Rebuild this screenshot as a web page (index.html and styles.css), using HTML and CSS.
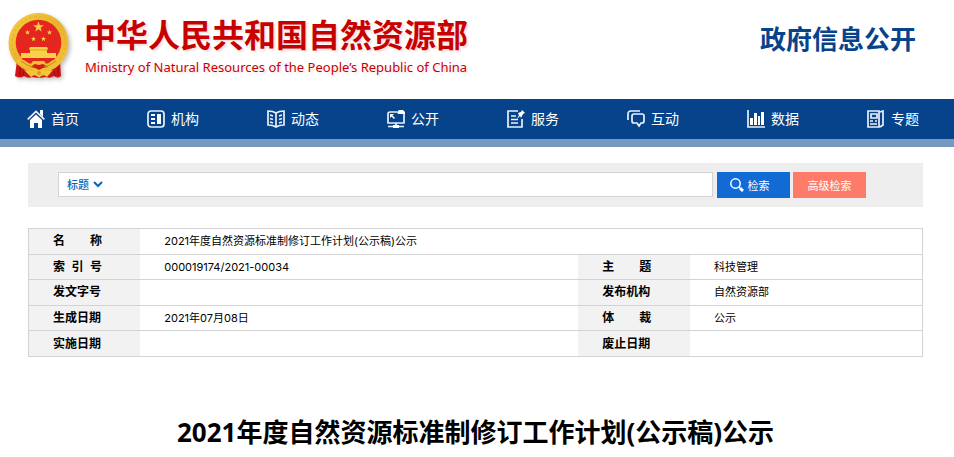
FILE: index.html
```html
<!DOCTYPE html>
<html lang="zh-CN">
<head>
<meta charset="utf-8">
<title>政府信息公开</title>
<link rel="stylesheet" href="styles.css">
</head>
<body>
<header class="header">
  <a class="brand" href="#">
    <svg class="emblem" viewBox="0 0 62 66" aria-hidden="true">
      <defs>
        <linearGradient id="gold" x1="0" y1="0" x2="1" y2="1">
          <stop offset="0" stop-color="#f6cf45"/><stop offset=".5" stop-color="#e9b32b"/><stop offset="1" stop-color="#f3c63c"/>
        </linearGradient>
        <path id="star" d="M0-5 1.2-1.6 4.8-1.5 1.9.6 2.9 4 0 2-2.9 4-1.9.6-4.8-1.5-1.2-1.6z"/>
      </defs>
      <path d="M9 47 7 63q5 3 9 0 4 3 8 1l7 1 7-1q4 2 8-1 4 3 7 0l-1-16z" fill="#cf1518"/>
      <path d="M12 54v9M50 54v9M16 58l-1 5M46 58l1 5" stroke="#8f0d12"/>
      <circle cx="30.500" cy="30" r="30" fill="url(#gold)"/>
      <circle cx="30.500" cy="30" r="26.500" fill="none" stroke="#e0aa2a" stroke-dasharray="2 3"/>
      <circle cx="30.500" cy="29.500" r="22.800" fill="#e5261f"/>
      <path d="M13 44q17 12 35 0l-4 6H17z" fill="#e5261f"/>
      <g fill="#f7d148">
        <use href="#star" transform="translate(30.500 14) scale(1.1)"/>
        <use href="#star" transform="translate(19.500 19.500) scale(.55)"/>
        <use href="#star" transform="translate(41.500 19.500) scale(.55)"/>
        <use href="#star" transform="translate(25.500 26) scale(.55)"/>
        <use href="#star" transform="translate(35.500 26) scale(.55)"/>
        <path d="M22 34h17l1 2-1 1v3h9v5H13v-5h9v-3l-1-1z"/>
      </g>
      <path d="M22 37h17" stroke="#d58f1c" stroke-width=".7"/>
      <path d="M8 46q9-1 14 6l3-4h11l3 4q5-7 14-6-1 9-12 9l-10 4-10-4q-11 0-13-9z" fill="#f0bf35"/>
      <path d="m22 54 5-3 4 1 4-1 5 3-5 1-4 2-4-2z" fill="#d51b1b"/>
      <path d="M13 48q6 5 12 6M48 48q-6 5-12 6" fill="none" stroke="#ca8a1b"/>
      <path d="M16 57q9 2 15 0 6 2 14 0l-6 7q-4-4-8 1-4-5-8-1z" fill="#f2c63b"/>
      <circle cx="31" cy="60" r="2" fill="#d89b22"/>
    </svg>
    <span class="brand-text">
      <strong class="brand-cn">中华人民共和国自然资源部</strong>
      <span class="brand-en">Ministry of Natural Resources of the People’s Republic of China</span>
    </span>
  </a>
  <h2 class="section-name">政府信息公开</h2>
</header>

<nav class="nav">
  <a href="#"><svg viewBox="0 0 18 18"><path class="line" d="M.7 9.300 9 1.500l8.300 7.800" stroke-width="2"/><path class="solid" d="M13 0h3v7l-3-3zM3 10l6-5.500 6 5.500v8h-4v-5H7v5H3z"/></svg>首页</a>
  <a href="#"><svg viewBox="0 0 18 18"><rect class="line" x="1" y="1" width="16" height="16" rx="3"/><path class="solid" d="M10 4h4v10h-4zM4 4h4v2H4zM4 8h4v2H4zM4 12h4v2H4z"/></svg>机构</a>
  <a href="#"><svg viewBox="0 0 18 18"><path class="line" d="M9 3Q6 1 1 1v14q5 0 8 2 3-2 8-2V1q-5 0-8 2zM9 3v14M3 5l3 1M3 8.500l3 1M3 12l3 1M15 5l-3 1M15 8.500l-3 1M15 12l-3 1"/></svg>动态</a>
  <a href="#"><svg viewBox="0 0 18 18"><path class="line" d="M10 2H3Q1 2 1 4v9h16V4M9 13v3M1 16.500h6M11 16.500h6M4 5l3.500 3.500"/><path class="solid" d="M12 0h4l2 2v2h-7l-1-2zM6 15h6v3H6zM3 4h4L3 8z"/></svg>公开</a>
  <a href="#"><svg viewBox="0 0 18 18"><path class="line" d="M11 1H1v16h14V9M4 6h5M4 9.500h7M4 13h7"/><path class="solid" d="m15 0 3 3-2 1-2 4-1-2-3 3 2-4-1-2 3-1z"/></svg>服务</a>
  <a href="#"><svg viewBox="0 0 18 18"><path class="line" d="M1 10V4q0-3 3-3h9M7 4h8q2 0 2 2v5q0 2-2 2h-1l-2 3-2-3H7q-2 0-2-2V6q0-2 2-2z"/></svg>互动</a>
  <a href="#"><svg viewBox="0 0 18 18"><path class="line" d="M1 0v17h17"/><path class="solid" d="M3 8h3v7H3zM7 3h3v12H7zM11 6h2v9h-2zM14 2h3v13h-3z"/></svg>数据</a>
  <a href="#"><svg viewBox="0 0 18 18"><path class="line" d="M1 1h11v16H1zM13 2l3-1v14l-3 2M3 11h3M3 14h7M8 11h2"/><path class="line" d="M4 4h6v4H4z"/></svg>专题</a>
</nav>

<main class="main">
  <form class="search">
    <div class="search-field">
      <select class="search-type" aria-label="检索范围"><option>标题</option></select>
      <svg class="chevron" viewBox="0 0 10 7" aria-hidden="true"><path d="m1 1 4 4 4-4"/></svg>
      <input class="search-input" type="text" aria-label="检索词">
    </div>
    <button class="button" type="submit"><svg viewBox="0 0 14 14" aria-hidden="true"><circle cx="5.500" cy="5.500" r="4.700"/><path d="m9 9 1 1"/><path class="handle" d="m10 10 3 3"/></svg>检索</button>
    <button class="button button-advanced" type="button">高级检索</button>
  </form>

  <table class="info">
    <colgroup><col class="col-label"><col class="col-wide"><col class="col-label"><col></colgroup>
    <tr><th scope="row"><span class="spread"><i>名</i><i>称</i></span></th><td colspan="3">2021年度自然资源标准制修订工作计划(公示稿)公示</td></tr>
    <tr><th scope="row"><span class="spread"><i>索</i><i>引</i><i>号</i></span></th><td>000019174/2021-00034</td><th scope="row"><span class="spread"><i>主</i><i>题</i></span></th><td>科技管理</td></tr>
    <tr><th scope="row">发文字号</th><td></td><th scope="row">发布机构</th><td>自然资源部</td></tr>
    <tr><th scope="row">生成日期</th><td>2021年07月08日</td><th scope="row"><span class="spread"><i>体</i><i>裁</i></span></th><td>公示</td></tr>
    <tr><th scope="row">实施日期</th><td></td><th scope="row">废止日期</th><td></td></tr>
  </table>

  <h1 class="title">2021年度自然资源标准制修订工作计划(公示稿)公示</h1>
</main>
</body>
</html>
```
FILE: styles.css
```css
* { box-sizing: border-box; }

body {
  margin: 0;
  background: #fff;
  color: #000;
  font-family: "Noto Sans", "Noto Sans CJK SC", sans-serif;
  font-size: 11px;
}

a { color: inherit; text-decoration: none; }

.header {
  display: flex;
  justify-content: space-between;
  align-items: flex-start;
  padding: 13px 38px 0 8px;
  height: 99px;
}

.brand { display: flex; gap: 14px; color: #c70000; }

.emblem {
  width: 62px;
  height: 66px;
  filter: drop-shadow(2px 2px 2px rgba(0, 0, 0, .25));
}

.brand-text {
  display: flex;
  flex-direction: column;
  text-shadow: 2px 2px 2px rgba(199, 0, 0, .12);
  white-space: nowrap;
}

.brand-cn { font-size: 32px; line-height: 44px; font-weight: 700; }
.brand-en { font-size: 13px; line-height: 20px; padding-left: 1px; }

.section-name {
  margin: 7px 0 0;
  color: #07438a;
  font-size: 26px;
  line-height: 38px;
  font-weight: 700;
}

.nav {
  display: flex;
  justify-content: space-between;
  padding: 0 35px 0 27px;
  background: #07438a;
  border-bottom: 8px solid #7799c0;
  color: #fff;
  font-size: 14px;
  line-height: 40px;
}

.nav a { display: flex; align-items: center; gap: 6px; }
.nav svg { width: 18px; height: 18px; }
.nav .line { fill: none; stroke: #e9f1fa; stroke-width: 1.7; }
.nav .solid { fill: #fff; }

.main { padding: 16px 31px 0 28px; }

.search {
  display: flex;
  align-items: flex-start;
  padding: 9px 57px 9px 30px;
  background: #eee;
}

.search-field {
  display: flex;
  flex: 1;
  align-items: center;
  height: 25px;
  margin-right: 4px;
  border: 1px solid #d3d3d3;
  background: #fff;
}

.search-type,
.search-input {
  border: 0;
  padding: 0;
  background: none;
  font: inherit;
  outline: 0;
}

.search-type {
  appearance: none;
  width: 26px;
  margin-left: 8px;
  color: #0866b8;
  font-weight: 500;
}

.search-input { flex: 1; min-width: 0; height: 23px; padding: 0 8px; }
.chevron { width: 10px; height: 7px; fill: none; stroke: #0866b8; stroke-width: 2; }

.button {
  display: flex;
  align-items: center;
  justify-content: center;
  gap: 4px;
  width: 73px;
  height: 26px;
  padding: 0 8px 0 0;
  border: 0;
  background: #126bd5;
  color: #fff;
  font: inherit;
}

.button svg { width: 14px; height: 14px; fill: none; stroke: #fff; stroke-width: 1.5; }
.button .handle { stroke-width: 3; }
.button-advanced { margin-left: 3px; padding: 0; background: #ff7b69; }

.info {
  width: 100%;
  height: 129px;
  margin-top: 21px;
  border-collapse: collapse;
  table-layout: fixed;
  border: 1px solid #d3d3d3;
}

.info tr { border-bottom: 1px solid #d3d3d3; }
.info th, .info td { padding: 0 0 0 24px; text-align: left; line-height: 24px; }
.info td { font-family: Inter, "Noto Sans CJK SC", sans-serif; }
.info th { background: #f2f2f2; font-size: 12px; font-weight: 700; }
.col-label { width: 12.5%; }
.col-wide { width: 49%; }

.spread { display: flex; justify-content: space-between; width: 49px; }
.spread i { font-style: normal; }

.title {
  margin: 56px 0 0;
  font-size: 26px;
  line-height: 38px;
  font-weight: 700;
  text-align: center;
}
```
